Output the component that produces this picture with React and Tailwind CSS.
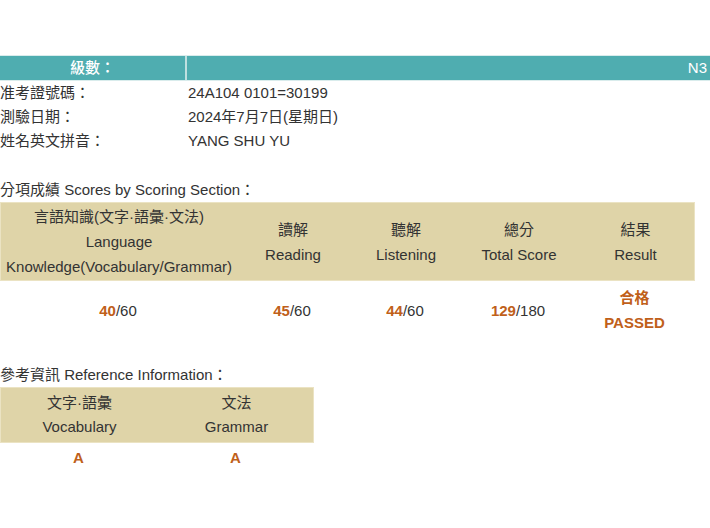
export default function App() {
  const orange = "text-[#c0601a]";
  return (
    <div className="w-[710px] h-[528px] bg-white text-[#333] text-[15px] font-['Liberation_Sans','Noto_Sans_CJK_TC',sans-serif]">
      <div className="pt-[55px]">
        <div className="flex h-[26px] bg-[#4fadb0] border-y border-[#d9ecec] text-white">
          <div className="w-[187px] flex items-center justify-center border-r-2 border-[#bfe0e0] font-medium">級數：</div>
          <div className="flex-1 flex items-center justify-end pr-[3px]">N3</div>
        </div>
        <div className="flex flex-col">
          {[
            ["准考證號碼：", "24A104 0101=30199"],
            ["測驗日期：", "2024年7月7日(星期日)"],
            ["姓名英文拼音：", "YANG SHU YU"],
          ].map(([a, b]) => (
            <div key={a} className="flex h-[24px] items-center">
              <div className="w-[188px]">{a}</div>
              <div>{b}</div>
            </div>
          ))}
        </div>

        <div className="mt-[25px] h-[24px] flex items-center">分項成績 Scores by Scoring Section：</div>
        <div className="w-[695px]">
          <div className="grid grid-cols-[236px_112px_114px_112px_121px] h-[79px] bg-[#dfd4a8] border border-[#ebe3c3] text-center leading-[25px]">
            <div className="flex flex-col justify-center">
              <div>言語知識(文字·語彙·文法)</div>
              <div>Language</div>
              <div className="whitespace-nowrap">Knowledge(Vocabulary/Grammar)</div>
            </div>
            <div className="flex flex-col justify-center"><div>讀解</div><div>Reading</div></div>
            <div className="flex flex-col justify-center"><div>聽解</div><div>Listening</div></div>
            <div className="flex flex-col justify-center"><div>總分</div><div>Total Score</div></div>
            <div className="flex flex-col justify-center"><div>結果</div><div>Result</div></div>
          </div>
          <div className="grid grid-cols-[236px_112px_114px_112px_121px] h-[58px] text-center leading-[25px]">
            <div className="flex items-center justify-center"><span className={`${orange} font-bold`}>40</span>/60</div>
            <div className="flex items-center justify-center"><span className={`${orange} font-bold`}>45</span>/60</div>
            <div className="flex items-center justify-center"><span className={`${orange} font-bold`}>44</span>/60</div>
            <div className="flex items-center justify-center"><span className={`${orange} font-bold`}>129</span>/180</div>
            <div className={`flex flex-col items-center justify-center font-bold ${orange}`}><div>合格</div><div>PASSED</div></div>
          </div>
        </div>

        <div className="mt-[24px] h-[24px] flex items-center">參考資訊 Reference Information：</div>
        <div className="w-[314px]">
          <div className="grid grid-cols-[157px_157px] h-[56px] bg-[#dfd4a8] border border-[#ebe3c3] text-center leading-[24px]">
            <div className="flex flex-col justify-center"><div>文字·語彙</div><div>Vocabulary</div></div>
            <div className="flex flex-col justify-center"><div>文法</div><div>Grammar</div></div>
          </div>
          <div className={`grid grid-cols-[157px_157px] h-[30px] text-center items-center font-bold ${orange}`}>
            <div>A</div>
            <div>A</div>
          </div>
        </div>
      </div>
    </div>
  );
}
